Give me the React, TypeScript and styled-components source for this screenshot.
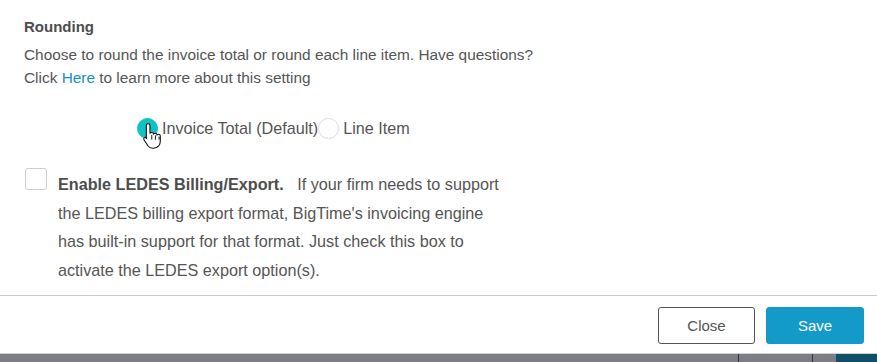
import React from 'react'
import styled, { createGlobalStyle } from 'styled-components'

const GlobalStyle = createGlobalStyle`
  html, body {
    margin: 0;
    padding: 0;
    background: #fff;
  }
  body {
    font-family: 'Liberation Sans', Arial, sans-serif;
    color: #555;
  }
`

const StyledModal = styled.div`
  display: flex;
  flex-direction: column;
  height: 362px;
  width: 877px;
  overflow: hidden;
`

const StyledBody = styled.div`
  flex: 1;
  padding: 17px 24px 0 24px;
`

const StyledHeading = styled.h3`
  color: #4d4d4d;
  font-size: 15px;
  font-weight: bold;
  margin: 0 0 6px 0;
  line-height: 20px;
`

const StyledHelp = styled.p`
  font-size: 15.4px;
  line-height: 23px;
  margin: 0;
  color: #555;

  a {
    color: #1a8fc4;
    text-decoration: none;
  }
`

const StyledRadioGroup = styled.div`
  align-items: center;
  display: flex;
  margin: 27px 0 0 113px;
  height: 24px;
  position: relative;
`

const StyledRadioOption = styled.label`
  align-items: center;
  display: flex;
  font-size: 16.2px;
  color: #555;
`

const StyledRadioDot = styled.span<{ checked?: boolean }>`
  background: ${props => (props.checked ? '#12c2c2' : '#fff')};
  border: 1px solid ${props => (props.checked ? '#12c2c2' : '#dcdcdc')};
  border-radius: 50%;
  box-sizing: border-box;
  display: inline-block;
  height: 21px;
  width: 21px;
  margin-right: 4px;
`

const StyledCursor = styled.svg`
  position: absolute;
  left: 5px;
  top: 6px;
`

const StyledCheckRow = styled.div`
  display: flex;
  margin: 27px 0 0 1px;
`

const StyledCheckbox = styled.span`
  border: 1px solid #ccc;
  border-radius: 3px;
  box-sizing: border-box;
  flex: none;
  height: 22px;
  margin-right: 11px;
  margin-top: 1px;
  width: 22px;
`

const StyledCheckText = styled.p`
  font-size: 16.2px;
  line-height: 28.7px;
  margin: 3px 0 0 0;
  width: 446px;
  color: #555;

  b {
    color: #4d4d4d;
  }
`

const StyledFooter = styled.div`
  align-items: center;
  border-top: 1px solid #c8c8c8;
  display: flex;
  gap: 11px;
  justify-content: flex-end;
  height: 57px;
  padding-right: 13px;
`

const StyledButton = styled.button<{ primary?: boolean }>`
  background: ${props => (props.primary ? '#139ac8' : '#fff')};
  border: 1px solid ${props => (props.primary ? '#139ac8' : '#555')};
  border-radius: 3px;
  color: ${props => (props.primary ? '#fff' : '#555')};
  font-family: 'Liberation Sans', Arial, sans-serif;
  font-size: 15px;
  height: 37px;
  margin-top: 1px;
  width: ${props => (props.primary ? '98px' : '97px')};
`

const StyledTaskbar = styled.div`
  background: #7d7d86;
  border-top: 1px solid #d0d0d4;
  display: flex;
  height: 8px;
`

const StyledTaskbarCell = styled.div<{ width: number; dark?: boolean; first?: boolean }>`
  background: ${props => (props.dark ? '#0f4f6b' : 'transparent')};
  border-left: ${props => (props.dark || props.first ? 'none' : '1px solid #333')};
  width: ${props => props.width}px;
`

const App = () => {
  return (
    <>
      <GlobalStyle />
      <StyledModal>
        <StyledBody>
          <StyledHeading>Rounding</StyledHeading>
          <StyledHelp>
            Choose to round the invoice total or round each line item. Have questions?
            <br />
            Click <a href="#">Here</a> to learn more about this setting
          </StyledHelp>

          <StyledRadioGroup>
            <StyledRadioOption>
              <StyledRadioDot checked />
              Invoice Total (Default)
            </StyledRadioOption>
            <StyledRadioOption>
              <StyledRadioDot />
              Line Item
            </StyledRadioOption>
            <StyledCursor width="22" height="28" viewBox="0 0 17 23">
              <path
                d="M4.5 1.5c.9 0 1.5.6 1.5 1.5v6.5c.3-.6.9-.9 1.5-.9.8 0 1.4.5 1.5 1.2.3-.4.8-.6 1.3-.6.8 0 1.4.6 1.5 1.3.3-.3.7-.5 1.2-.5.9 0 1.5.7 1.5 1.6v4.2c0 3.3-2.2 5.7-5.3 5.7H8.1c-1.6 0-2.8-.7-3.8-2L1.2 14.8c-.5-.7-.4-1.5.2-2 .6-.4 1.4-.3 1.9.3L3 14V3c0-.9.6-1.5 1.5-1.5z"
                fill="#fff"
                stroke="#111"
                strokeWidth="0.9"
              />
              <path d="M7.5 10.5v4M10.5 11v3.5M13.5 12v2.5" stroke="#111" strokeWidth="0.8" />
            </StyledCursor>
          </StyledRadioGroup>

          <StyledCheckRow>
            <StyledCheckbox />
            <StyledCheckText>
              <b>Enable LEDES Billing/Export.</b>&nbsp;&nbsp; If your firm needs to support the LEDES billing export
              format, BigTime's invoicing engine has built-in support for that format. Just check this box to activate
              the LEDES export option(s).
            </StyledCheckText>
          </StyledCheckRow>
        </StyledBody>

        <StyledFooter>
          <StyledButton>Close</StyledButton>
          <StyledButton primary>Save</StyledButton>
        </StyledFooter>

        <StyledTaskbar>
          <StyledTaskbarCell width={740} first />
          <StyledTaskbarCell width={73} />
          <StyledTaskbarCell width={23} />
          <StyledTaskbarCell width={41} dark />
        </StyledTaskbar>
      </StyledModal>
    </>
  )
}

export default App
